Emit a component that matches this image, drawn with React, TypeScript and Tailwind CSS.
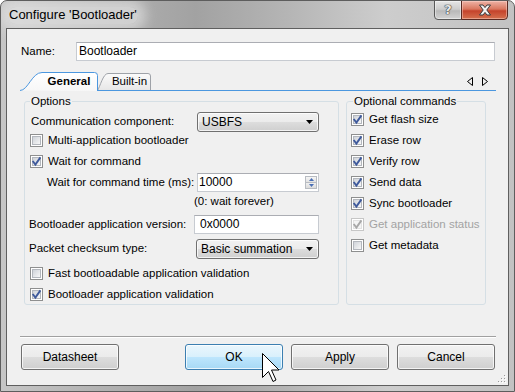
import React from "react";

const font = "font-['Liberation_Sans',Arial,sans-serif]";

function Check({ checked = false, disabled = false }: { checked?: boolean; disabled?: boolean }) {
  return (
    <span
      className={`relative flex h-[13px] w-[13px] shrink-0 border ${
        disabled ? "border-[#c6c6c6]" : "border-[#8e8f8f]"
      } bg-white p-[1px]`}
    >
      <span
        className={`block h-full w-full border ${
          disabled
            ? "border-[#e2e2e2] bg-[#f4f4f4]"
            : "border-[#b3b7bd] bg-[linear-gradient(135deg,#cfd3d9,#f7f7f7)]"
        }`}
      />
      {checked && (
        <svg width="13" height="13" viewBox="0 0 13 13" className="absolute left-[-1px] top-[-1px]">
          <path
            d="M2.7 6 L5.4 9.6 L10.4 2.4"
            fill="none"
            stroke={disabled ? "#a8a8a8" : "#3f5a9c"}
            strokeWidth="1.9"
          />
        </svg>
      )}
    </span>
  );
}

function CheckRow({
  label,
  checked,
  disabled,
  className = "",
}: {
  label: string;
  checked?: boolean;
  disabled?: boolean;
  className?: string;
}) {
  return (
    <div className={`flex h-[13px] items-center gap-[5px] ${className}`}>
      <Check checked={checked} disabled={disabled} />
      <span className={`leading-[13px] whitespace-nowrap ${disabled ? "text-[#a3a3a3]" : "text-black"}`}>{label}</span>
    </div>
  );
}

function Combo({ value, w }: { value: string; w: string }) {
  return (
    <div
      className={`${w} flex h-[20px] items-center justify-between rounded-[3px] border border-[#707070] bg-[linear-gradient(#f2f2f2,#ebebeb_50%,#dddddd_50%,#cfcfcf)] pl-[4px] pr-[5px] shadow-[inset_0_0_0_1px_rgba(255,255,255,0.75)]`}
    >
      <span className="text-[12px] leading-[18px]">{value}</span>
      <svg width="7" height="4" viewBox="0 0 7 4">
        <path d="M0 0 H7 L3.5 4 Z" fill="#000" />
      </svg>
    </div>
  );
}

function Button({ label, primary = false }: { label: string; primary?: boolean }) {
  return (
    <div
      className={`flex h-[26px] w-[98px] items-center justify-center rounded-[3px] border ${
        primary
          ? "border-[#3c7fb1] bg-[linear-gradient(#eaf6fd,#d9f0fc_50%,#bee6fd_50%,#a7d9f5)]"
          : "border-[#707070] bg-[linear-gradient(#f2f2f2,#ebebeb_50%,#dddddd_50%,#cfcfcf)]"
      } shadow-[inset_0_0_0_1px_rgba(255,255,255,0.75)]`}
    >
      <span className="text-[12px] leading-[14px] text-black">{label}</span>
    </div>
  );
}

export default function App() {
  return (
    <div
      className={`${font} relative flex h-[392px] w-[515px] flex-col overflow-hidden rounded-t-[7px] border border-[#5d5d5d] bg-[linear-gradient(90deg,#c6c6c6_0%,#b3b3b3_18%,#a2a2a2_38%,#b4b4b4_55%,#cdcdcd_75%,#c2c2c2_100%)] text-[11.5px] text-black`}
    >
      {/* Title bar */}
      <div className="flex h-[27px] shrink-0 items-start pl-[7px] pr-[6px]">
        <div className="mt-[6px] rounded-[8px] bg-[rgba(232,232,232,0.6)] px-[1px] shadow-[0_0_12px_8px_rgba(232,232,232,0.6)]">
          <span className="text-[13px] leading-[15px] text-black">Configure 'Bootloader'</span>
        </div>
        <div className="ml-auto -mt-[1px] flex">
          <div className="flex h-[20px] w-[28px] items-center justify-center rounded-bl-[4px] border border-[#595959] bg-[linear-gradient(#e6e6e6,#cdcdcd_45%,#b9b9b9_55%,#d3d3d3)] shadow-[inset_0_0_0_1px_rgba(255,255,255,0.45)]">
            <span className="font-['DejaVu_Sans',sans-serif] text-[13px] font-bold leading-[14px] text-[#e8e8e8] [text-shadow:0_0_1px_#333,0_0_1px_#333,0_0_1px_#333]">
              ?
            </span>
          </div>
          <div className="-ml-[1px] flex h-[20px] w-[47px] items-center justify-center rounded-br-[4px] border border-[#5a2a22] bg-[linear-gradient(#eeb3a6,#d9775f_45%,#c5432b_55%,#d5714f)] shadow-[inset_0_0_0_1px_rgba(255,220,210,0.45)]">
            <svg width="14" height="12" viewBox="0 0 14 12">
              <path
                d="M1.5 1 H5 L7 3.6 L9 1 H12.5 L8.8 6 L12.5 11 H9 L7 8.4 L5 11 H1.5 L5.2 6 Z"
                fill="#f2f2f2"
                stroke="#3b3b3b"
                strokeWidth="1"
                strokeLinejoin="round"
              />
            </svg>
          </div>
        </div>
      </div>

      {/* Client area */}
      <div className="relative mx-[5px] mb-[5px] flex flex-1 flex-col border border-[#5f5f5f] bg-[#f0f0f0]">
        {/* Name row */}
        <div className="mt-[13px] flex h-[19px] items-center pl-[14px]">
          <span className="w-[55px]">Name:</span>
          <div className="flex h-[19px] w-[419px] items-center border border-[#c7cbd1] border-t-[#abadb3] bg-white pl-[2px]">
            <span className="text-[12px] leading-[15px]">Bootloader</span>
          </div>
        </div>

        {/* Tabs */}
        <div className="relative ml-[13px] mt-[11px] flex h-[19px] w-[476px] items-start">
          <svg width="476" height="19" viewBox="0 0 476 19" className="absolute inset-0">
            <defs>
              <linearGradient id="bt" x1="0" y1="0" x2="0" y2="1">
                <stop offset="0" stopColor="#fbfbfb" />
                <stop offset="1" stopColor="#e6e6e6" />
              </linearGradient>
              <linearGradient id="gt" x1="0" y1="0" x2="0" y2="1">
                <stop offset="0" stopColor="#ffffff" />
                <stop offset="1" stopColor="#f7f7f7" />
              </linearGradient>
            </defs>
            <path d="M77.5 18.5 H476" stroke="#4b97df" strokeWidth="1" />
            <path
              d="M77.5 18.5 C80 15, 83 1.5, 88 1.5 L128 1.5 Q130.5 1.5 130.5 4 L130.5 18.5"
              fill="url(#bt)"
              stroke="#9ea2a8"
              strokeWidth="1"
            />
            <path d="M77.5 18.5 H131" stroke="#4b97df" strokeWidth="1" />
            <path
              d="M0 18.5 C8 18.5, 12 0.5, 22 0.5 L74.5 0.5 Q77.5 0.5 77.5 3.5 L77.5 19"
              fill="url(#gt)"
              stroke="#4b97df"
              strokeWidth="1"
            />
            <polygon points="452.5,5.5 447.5,9.5 452.5,13.5" fill="none" stroke="#000" strokeWidth="1" />
            <polygon points="462.5,5.5 467.5,9.5 462.5,13.5" fill="none" stroke="#000" strokeWidth="1" />
          </svg>
          <span className="relative ml-[20px] w-[58px] pt-[3px] text-center font-bold leading-[13px]">General</span>
          <span className="relative ml-[10px] w-[43px] pt-[3px] text-center leading-[13px]">Built-in</span>
        </div>

        {/* Tab panel */}
        <div className="ml-[17px] mt-[10px] flex h-[204px] gap-[7px]">
          {/* Options */}
          <div className="relative flex w-[315px] flex-col rounded-[3px] border border-[#d5dfe5]">
            <span className="absolute left-[5px] top-[-8px] bg-[#f0f0f0] px-[1px] leading-[14px]">Options</span>
            <div className="mt-[10px] flex h-[20px] items-center justify-between pl-[6px] pr-[19px]">
              <span>Communication component:</span>
              <Combo value="USBFS" w="w-[122px]" />
            </div>
            <CheckRow className="ml-[5px] mt-[2px]" label="Multi-application bootloader" />
            <CheckRow className="ml-[5px] mt-[8px]" label="Wait for command" checked />
            <div className="mt-[5px] flex h-[19px] items-center justify-between pl-[22px] pr-[19px]">
              <span>Wait for command time (ms):</span>
              <div className="flex h-[19px] w-[122px] items-center justify-between border border-[#c7cbd1] border-t-[#abadb3] bg-white pl-[1px] pr-[1px]">
                <span className="text-[12px] leading-[15px]">10000</span>
                <div className="flex h-[13px] w-[12px] flex-col border border-[#b8bcc2]">
                  <div className="flex flex-1 items-center justify-center border-b border-[#b8bcc2] bg-[linear-gradient(#f6f6f6,#e2e2e2)]">
                    <svg width="5" height="3" viewBox="0 0 5 3">
                      <path d="M0 3 H5 L2.5 0 Z" fill="#4a6fb5" />
                    </svg>
                  </div>
                  <div className="flex flex-1 items-center justify-center bg-[linear-gradient(#f0f0f0,#dcdcdc)]">
                    <svg width="5" height="3" viewBox="0 0 5 3">
                      <path d="M0 0 H5 L2.5 3 Z" fill="#4a6fb5" />
                    </svg>
                  </div>
                </div>
              </div>
            </div>
            <div className="mt-[2px] h-[15px] pl-[169px] leading-[15px]">(0: wait forever)</div>
            <div className="mt-[6px] flex h-[19px] items-center justify-between pl-[4px] pr-[19px]">
              <span>Bootloader application version:</span>
              <div className="flex h-[19px] w-[125px] items-center border border-[#c7cbd1] border-t-[#abadb3] bg-white pl-[5px]">
                <span className="text-[12px] leading-[15px]">0x0000</span>
              </div>
            </div>
            <div className="mt-[5px] flex h-[20px] items-center justify-between pl-[4px] pr-[19px]">
              <span>Packet checksum type:</span>
              <Combo value="Basic summation" w="w-[123px]" />
            </div>
            <CheckRow className="ml-[5px] mt-[8px]" label="Fast bootloadable application validation" />
            <CheckRow className="ml-[5px] mt-[8px]" label="Bootloader application validation" checked />
          </div>

          {/* Optional commands */}
          <div className="relative flex w-[140px] flex-col gap-[8px] rounded-[3px] border border-[#d5dfe5] pl-[4px] pt-[11px]">
            <span className="absolute left-[6px] top-[-8px] whitespace-nowrap bg-[#f0f0f0] px-[1px] leading-[14px]">
              Optional commands
            </span>
            <CheckRow label="Get flash size" checked />
            <CheckRow label="Erase row" checked />
            <CheckRow label="Verify row" checked />
            <CheckRow label="Send data" checked />
            <CheckRow label="Sync bootloader" checked />
            <CheckRow label="Get application status" checked disabled />
            <CheckRow label="Get metadata" />
          </div>
        </div>

        {/* Separator */}
        <div className="ml-[13px] mt-[31px] h-[2px] w-[476px] border-t border-b border-t-[#a0a0a0] border-b-white" />

        {/* Buttons */}
        <div className="mt-[6px] flex pl-[14px] pr-[13px]">
          <Button label="Datasheet" />
          <div className="ml-auto flex gap-[8px]">
            <Button label="OK" primary />
            <Button label="Apply" />
            <Button label="Cancel" />
          </div>
        </div>

        {/* Resize grip */}
        <svg width="9" height="9" viewBox="0 0 9 9" className="absolute bottom-[2px] right-[2px]">
          {[
            [7, 1],
            [4, 4],
            [7, 4],
            [1, 7],
            [4, 7],
            [7, 7],
          ].map(([x, y], i) => (
            <g key={i}>
              <rect x={x + 1} y={y + 1} width="1" height="1" fill="#ffffff" />
              <rect x={x} y={y} width="1" height="1" fill="#9a9a9a" />
            </g>
          ))}
        </svg>
      </div>

      {/* Mouse cursor */}
      <svg width="19" height="31" viewBox="0 0 19 31" className="absolute left-[260px] top-[351px]">
        <path
          d="M1.5 1.5 L1.5 25.5 L7.5 19.5 L12 29.5 L15 28 L10.5 18 L18 18 Z"
          fill="#ffffff"
          stroke="#000000"
          strokeWidth="1"
          strokeLinejoin="miter"
        />
      </svg>
    </div>
  );
}
